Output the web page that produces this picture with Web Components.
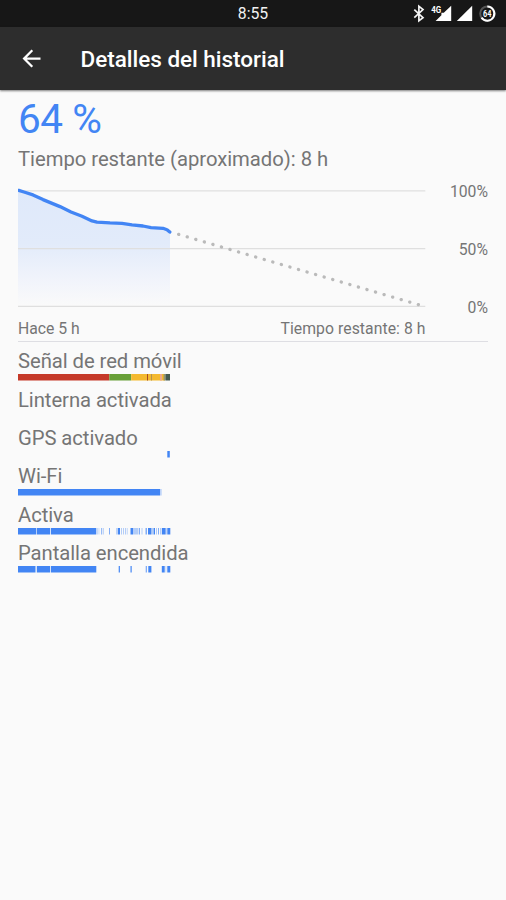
<!DOCTYPE html>
<html lang="es">
<head>
<meta charset="utf-8">
<title>Detalles del historial</title>
<style>
html,body{margin:0;height:100%;background:#fafafa}
body{font-family:Roboto,"Liberation Sans",sans-serif;color:#757575}
</style>
</head>
<body>
<battery-history></battery-history>
<script>
class Base extends HTMLElement {
  constructor() {
    super();
    this.attachShadow({ mode: 'open' });
  }
  connectedCallback() { this.shadowRoot.innerHTML = this.render(); }
}

customElements.define('status-bar', class extends Base {
  render() {
    return `<style>
      :host{display:grid;grid-template-columns:1fr auto 1fr;align-items:start;height:27px;background:#171717;color:#f2f2f2;font-size:15.75px;line-height:27px}
      span{grid-column:2;padding-top:1px;line-height:26px}
      svg{justify-self:end;display:block}
    </style>
    <span>8:55</span>
    <svg width="106" height="27" viewBox="400 0 106 27">
      <path d="M414.3 9.6 423 17.6 418.9 20.8V6.2L423 9.6 414.3 17.6" fill="none" stroke="#f5f5f5" stroke-width="1.7"/>
      <path d="M451.2 5.8V21H435.6L441.4 15.2V12.8H443.8Z" fill="#fff"/>
      <path d="M472.2 5.8V21H456.8Z" fill="#fff"/>
      <text x="431.2" y="12.9" font-size="9" font-weight="700" fill="#fff" textLength="10" lengthAdjust="spacingAndGlyphs">4G</text>
      <circle cx="487.3" cy="13.6" r="7.1" fill="none" stroke="#555" stroke-width="2"/>
      <path d="M487.3 6.5A7.1 7.1 0 1 1 481.5 17.7" fill="none" stroke="#fff" stroke-width="2"/>
      <text x="487.3" y="16.5" font-size="8.5" font-weight="700" fill="#fff" text-anchor="middle" textLength="8.4" lengthAdjust="spacingAndGlyphs">64</text>
    </svg>`;
  }
});

customElements.define('app-bar', class extends Base {
  render() {
    return `<style>
      :host{display:flex;align-items:center;height:63px;padding-left:18px;gap:35.5px;background:#2d2d2d;color:#fff;position:relative;box-shadow:0 1px 2px rgba(0,0,0,.5)}
      svg{width:27px;height:27px}
      h1{margin:0;font-size:22.5px;font-weight:500;line-height:27px;padding-top:2px;letter-spacing:-.02px}
    </style>
    <svg viewBox="0 0 24 24"><path fill="#fff" d="M20 11H7.83l5.59-5.59L12 4l-8 8 8 8 1.41-1.41L7.83 13H20z"/></svg>
    <h1><slot></slot></h1>`;
  }
});

customElements.define('battery-chart', class extends Base {
  render() {
    return `<style>
      :host{display:block;border-bottom:1px solid #dedee3;height:156px;font-size:15.75px;line-height:18px}
      .plot{display:flex;justify-content:space-between;height:133px}
      svg{display:block;flex:none}
      .scale{display:flex;flex-direction:column;justify-content:space-between;text-align:right;height:134px;margin-top:-2px}
      .times{display:flex;justify-content:space-between;width:407.5px;padding-top:2px}
      .times span+span{letter-spacing:.06px}
    </style>
    <div class="plot">
      <svg width="410" height="133" viewBox="18 185 410 133">
        <defs><linearGradient id="g" gradientUnits="userSpaceOnUse" x1="0" y1="190" x2="0" y2="306">
          <stop offset="0" stop-color="#dfe9fa"/><stop offset=".46" stop-color="#e2ebfa"/><stop offset=".75" stop-color="#f0f3fb"/><stop offset="1" stop-color="#fafafa"/>
        </linearGradient></defs>
        <path fill="url(#g)" d="M18 190.2 24 192.2 33 195.3 43 200.3 60 207.3 71 212.8 82 217 92 221.2 97 222.4 110 223.3H122L132 225.2 143 226.3 151 227.8 163 228.6 167 230 170 232.4V306H18Z"/>
        <path stroke="#dfdfdf" stroke-width="1.2" d="M18 190.8H425.3M18 248.6H425.3M18 306.3H425.3"/>
        <path fill="none" stroke="#4285f4" stroke-width="3.3" stroke-linejoin="round" stroke-linecap="round" d="M18.8 190.4 24 192 33 194.9 43 199.6 60 206.6 71 212 82 216.3 92 220.9 97 222.1 110 222.9 122 223.3 132 224.9 143 226 151 227.6 163 228.3 167 229.7 169.8 232.1"/>
        <path stroke="#bababa" stroke-width="3.3" stroke-linecap="round" stroke-dasharray="0.1 8.82" d="M178.6 234.4 419 304.8"/>
      </svg>
      <div class="scale"><span>100%</span><span>50%</span><span>0%</span></div>
    </div>
    <div class="times"><span>Hace 5 h</span><span>Tiempo restante: 8 h</span></div>`;
  }
});

/* Each segment is "start:end[:color]", in pixels from the left edge of the timeline. */
customElements.define('usage-row', class extends Base {
  render() {
    const rects = (this.getAttribute('segments') || '').split(' ').filter(Boolean).map(s => {
      const [a, b, c = '#4285f4'] = s.split(':');
      return `<rect x="${a}" y="0" width="${b - a}" height="6.5" fill="${c}"/>`;
    }).join('');
    return `<style>
      :host{display:block;height:38.4px;font-size:20.25px;line-height:25px;letter-spacing:-.06px}
      svg{display:block}
    </style>
    <slot></slot>
    <svg width="155" height="7">${rects}</svg>`;
  }
});

customElements.define('battery-history', class extends Base {
  render() {
    const soft = '#b3cdf8', mid = '#82adf6';
    const bursts = [
      `79.3:80:${soft}`, `80.6:81.3:${soft}`, `83.2:84.2:${mid}`, `85:85.8:${soft}`, `91:92:${mid}`,
      `98.5:99.5:${mid}`, '100:102', `103:104:${soft}`, `105:106:${soft}`, `107:108:${soft}`, `108.8:109.6:${soft}`,
      '112.5:115', `115:120.5:${soft}`, `121:122:${mid}`, `123.5:124.5:${soft}`,
      `127.5:129:${mid}`, '130:133.5', `134:135:${soft}`, '135.5:137', `138:139:${soft}`, `140:141:${mid}`, `142:143:${soft}`,
      '143.8:147', `147:148.5:${mid}`, '149.3:152.3'
    ].join(' ');
    return `<style>
      :host{display:block}
      main{padding:10px 18px 0}
      .level{font-size:40.5px;line-height:38px;color:#4285f4;letter-spacing:-.4px}
      .left{font-size:20.25px;line-height:24px;padding:9px 0 14px;letter-spacing:-.03px}
      .rows{padding-top:7.2px}
    </style>
    <status-bar></status-bar>
    <app-bar>Detalles del historial</app-bar>
    <main>
      <div class="level">64 %</div>
      <div class="left">Tiempo restante (aproximado): 8 h</div>
      <battery-chart></battery-chart>
      <div class="rows">
        <usage-row segments="0:91.3:#c53929 91.3:113.2:#689f38 113.2:147:#f4b92f 129:130:#a64b22 133:134:#b5934e 142:144:#eba98e 145.5:147:#9b9666 147.3:152:#455a50">Señal de red móvil</usage-row>
        <usage-row>Linterna activada</usage-row>
        <usage-row segments="149.3:151.8">GPS activado</usage-row>
        <usage-row segments="0:142.3 142.8:143.6:${soft}">Wi-Fi</usage-row>
        <usage-row segments="0:18.2 18.8:32.2 33:78.3 ${bursts}">Activa</usage-row>
        <usage-row segments="0:17.5 18.8:32.2 33:78.3 100.7:101.9 112.5:113.7 127.7:129:${mid} 130.3:133.4 143.8:146.7 147.5:148.3:${soft} 149.3:152.3">Pantalla encendida</usage-row>
      </div>
    </main>`;
  }
});
</script>
</body>
</html>
